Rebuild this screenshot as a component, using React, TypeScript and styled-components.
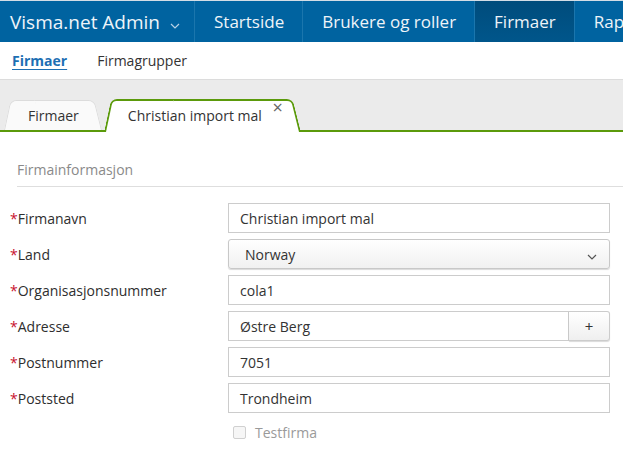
import styled, { createGlobalStyle } from "styled-components"

const GlobalStyle = createGlobalStyle`
  html, body {
    margin: 0;
    padding: 0;
    background: #ffffff;
    font-family: "Open Sans", "Liberation Sans", sans-serif;
    color: #333;
  }
`

const Page = styled.div`
  width: 623px;
  height: 467px;
  overflow: hidden;
`

const TopBar = styled.nav`
  display: flex;
  height: 42px;
  background: #0063a0;
  border-top: 1px solid #d3dde6;
  box-sizing: border-box;
  white-space: nowrap;
  overflow: hidden;
`

const NavItem = styled.div<{ $active?: boolean; $brand?: boolean }>`
  display: flex;
  align-items: center;
  gap: 10px;
  padding: ${(p) => (p.$brand ? "0 14px 0 10px" : "0 18px 0 19px")};
  font-size: ${(p) => (p.$brand ? 19 : 17)}px;
  color: #eef4f9;
  border-right: 1px solid #1b76ad;
  background: ${(p) =>
    p.$active ? "linear-gradient(#004c7c, #00568b)" : "transparent"};
  flex-shrink: 0;
`

const SubNav = styled.div`
  display: flex;
  align-items: center;
  gap: 30px;
  height: 37px;
  padding-left: 12px;
  border-bottom: 1px solid #dcdcdc;
  font-size: 14px;
`

const SubLink = styled.span<{ $active?: boolean }>`
  color: ${(p) => (p.$active ? "#1d6fb3" : "#333")};
  font-weight: ${(p) => (p.$active ? 700 : 400)};
  text-decoration: ${(p) => (p.$active ? "underline" : "none")};
  text-underline-offset: 3px;
`

const TabBar = styled.div`
  display: flex;
  align-items: flex-end;
  height: 50px;
  background: #ebebeb;
  border-bottom: 2px solid #5b9a0b;
  padding-left: 4px;
  gap: 2px;
`

const Tab = styled.div<{ $active?: boolean }>`
  position: relative;
  z-index: ${(p) => (p.$active ? 2 : 1)};
  height: ${(p) => (p.$active ? 33 : 30)}px;
  margin-bottom: ${(p) => (p.$active ? -2 : 0)}px;
  padding: ${(p) => (p.$active ? "0 39px 0 24px" : "0 23px 0 24px")};
  display: flex;
  align-items: center;
  font-size: 14px;
  color: #333;

  &::before,
  &::after {
    content: "";
    position: absolute;
    top: 0;
    bottom: 0;
    width: 60%;
    z-index: -1;
    background: ${(p) => (p.$active ? "#fff" : "#fafafa")};
    border: ${(p) => (p.$active ? "2px solid #5b9a0b" : "1px solid #dcdcdc")};
    border-bottom: none;
  }
  &::before {
    left: 0;
    border-right: none;
    border-radius: 6px 0 0 0;
    transform: skewX(-12deg);
    transform-origin: bottom left;
  }
  &::after {
    right: 0;
    border-left: none;
    border-radius: 0 6px 0 0;
    transform: skewX(14deg);
    transform-origin: bottom right;
  }
`

const Close = styled.span`
  position: absolute;
  right: 18px;
  top: -1px;
  font-size: 18px;
  line-height: 18px;
  color: #666;
`

const Content = styled.div`
  padding: 28px 0 0 0;
`

const SectionTitle = styled.div`
  margin-left: 17px;
  padding-bottom: 7px;
  border-bottom: 1px solid #dedede;
  font-size: 14px;
  color: #8a8a8a;
`

const Form = styled.div`
  display: flex;
  flex-direction: column;
  gap: 6px;
  padding: 16px 13px 0 10px;
`

const Row = styled.div`
  display: grid;
  grid-template-columns: 218px 1fr;
  align-items: center;
  height: 30px;
`

const Label = styled.label`
  font-size: 14px;
  color: #2e2e2e;
`

const Req = styled.span`
  color: #c8102e;
`

const Input = styled.div`
  height: 30px;
  box-sizing: border-box;
  border: 1px solid #cccccc;
  padding: 0 11px;
  display: flex;
  align-items: center;
  font-size: 14px;
  color: #333;
  background: #fff;
`

const Select = styled.div`
  height: 30px;
  box-sizing: border-box;
  border: 1px solid #c8c8c8;
  border-radius: 3px;
  padding: 0 12px 0 16px;
  display: flex;
  align-items: center;
  justify-content: space-between;
  font-size: 14px;
  color: #333;
  background: linear-gradient(#ffffff, #f1f1f1);
  box-shadow: 0 1px 1px rgba(0, 0, 0, 0.15);
`

const InputGroup = styled.div`
  display: flex;
  height: 30px;

  & > ${Input} {
    flex: 1;
  }
`

const AddButton = styled.div`
  width: 41px;
  box-sizing: border-box;
  border: 1px solid #cccccc;
  border-left: none;
  border-radius: 0 3px 3px 0;
  display: flex;
  align-items: center;
  justify-content: center;
  font-size: 15px;
  color: #333;
  background: linear-gradient(#ffffff, #efefef);
  box-shadow: 0 1px 1px rgba(0, 0, 0, 0.15);
`

const CheckRow = styled.div`
  display: flex;
  align-items: center;
  gap: 9px;
  margin: 10px 0 0 233px;
  font-size: 14px;
  color: #9a9a9a;
`

const Box = styled.span`
  width: 11px;
  height: 11px;
  border: 1px solid #d0d0d0;
  border-radius: 2px;
  background: #f6f6f6;
`

const fields = [
  { label: "Firmanavn", value: "Christian import mal" },
  { label: "Land", value: "Norway", select: true },
  { label: "Organisasjonsnummer", value: "cola1" },
  { label: "Adresse", value: "Østre Berg", add: true },
  { label: "Postnummer", value: "7051" },
  { label: "Poststed", value: "Trondheim" },
]

const Chevron = () => (
  <svg width="10" height="6" viewBox="0 0 10 6">
    <path d="M1 1l4 4 4-4" fill="none" stroke="currentColor" strokeWidth="1.2" />
  </svg>
)

const App = () => (
  <Page>
    <GlobalStyle />
    <TopBar>
      <NavItem $brand>
        Visma.net Admin
        <span style={{ color: "#b8d2e6" }}>
          <Chevron />
        </span>
      </NavItem>
      <NavItem>Startside</NavItem>
      <NavItem>Brukere og roller</NavItem>
      <NavItem $active>Firmaer</NavItem>
      <NavItem>Rapporter</NavItem>
    </TopBar>
    <SubNav>
      <SubLink $active>Firmaer</SubLink>
      <SubLink>Firmagrupper</SubLink>
    </SubNav>
    <TabBar>
      <Tab>Firmaer</Tab>
      <Tab $active>
        Christian import mal
        <Close>×</Close>
      </Tab>
    </TabBar>
    <Content>
      <SectionTitle>Firmainformasjon</SectionTitle>
      <Form>
        {fields.map((f) => (
          <Row key={f.label}>
            <Label>
              <Req>*</Req>
              {f.label}
            </Label>
            {f.select ? (
              <Select>
                {f.value}
                <span style={{ color: "#555" }}>
                  <Chevron />
                </span>
              </Select>
            ) : f.add ? (
              <InputGroup>
                <Input>{f.value}</Input>
                <AddButton>+</AddButton>
              </InputGroup>
            ) : (
              <Input>{f.value}</Input>
            )}
          </Row>
        ))}
      </Form>
      <CheckRow>
        <Box />
        Testfirma
      </CheckRow>
    </Content>
  </Page>
)

export default App
